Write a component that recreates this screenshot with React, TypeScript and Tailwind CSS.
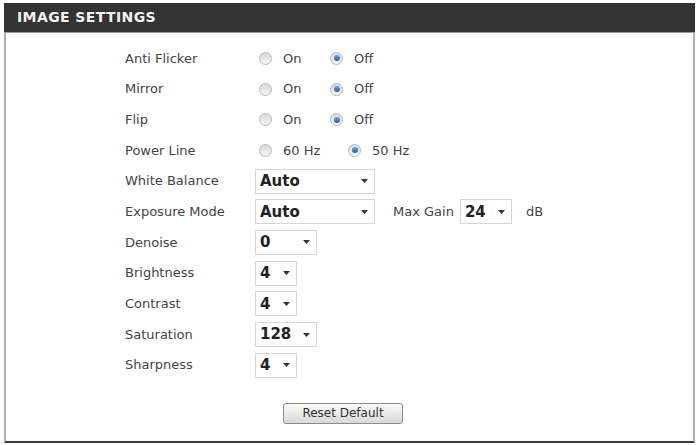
import React from 'react';

const font = { fontFamily: '"DejaVu Sans", Verdana, sans-serif' };

function Radio({ checked }: { checked?: boolean }) {
  return (
    <span className="ml-[4px] flex h-[13px] w-[13px] shrink-0 items-center justify-center rounded-full border border-[#b9b9b9] bg-gradient-to-b from-[#d8d8d8] to-[#f6f6f6]">
      {checked && (
        <span className="h-[6px] w-[6px] rounded-full bg-gradient-to-b from-[#6fa6dc] to-[#1f5fa6]" />
      )}
    </span>
  );
}

function RadioOption({ label, checked, width }: { label: string; checked?: boolean; width: string }) {
  return (
    <div className={`flex items-center ${width}`}>
      <Radio checked={checked} />
      <span className="ml-[11px] text-[13px] text-[#444]">{label}</span>
    </div>
  );
}

function Select({ value, width }: { value: string; width: string }) {
  return (
    <div
      className={`flex h-[25px] items-center justify-between border border-[#d6d6d6] bg-white pl-[4px] pr-[6px] ${width}`}
    >
      <span className="text-[15px] font-bold text-[#222]">{value}</span>
      <svg width="7" height="4" viewBox="0 0 7 4">
        <path d="M0 0h7L3.5 4z" fill="#333" />
      </svg>
    </div>
  );
}

function Row({ label, children }: { label: string; children: React.ReactNode }) {
  return (
    <div className="flex h-[30.7px] items-center">
      <div className="w-[130px] text-[13px] text-[#444]">{label}</div>
      <div className="flex items-center">{children}</div>
    </div>
  );
}

export default function App() {
  return (
    <div className="h-[445px] w-[698px] overflow-hidden bg-white pl-[4px] pt-[3px]" style={font}>
      <div className="w-[691px]">
        <div className="flex h-[29px] items-center bg-[#333333] pl-[13px]">
          <span className="text-[14px] font-bold tracking-[0.4px] text-[#f2f2f2]">IMAGE SETTINGS</span>
        </div>
        <div className="border-x-2 border-t border-b-2 border-x-[#b0b0b0] border-t-[#9a9a9a] border-b-[#3a3a3a] pb-[17px] pt-[10px]">
          <div className="pl-[119px]">
            <Row label="Anti Flicker">
              <RadioOption label="On" width="w-[71px]" />
              <RadioOption label="Off" checked width="w-[60px]" />
            </Row>
            <Row label="Mirror">
              <RadioOption label="On" width="w-[71px]" />
              <RadioOption label="Off" checked width="w-[60px]" />
            </Row>
            <Row label="Flip">
              <RadioOption label="On" width="w-[71px]" />
              <RadioOption label="Off" checked width="w-[60px]" />
            </Row>
            <Row label="Power Line">
              <RadioOption label="60 Hz" width="w-[89px]" />
              <RadioOption label="50 Hz" checked width="w-[80px]" />
            </Row>
            <Row label="White Balance">
              <Select value="Auto" width="w-[120px]" />
            </Row>
            <Row label="Exposure Mode">
              <Select value="Auto" width="w-[120px]" />
              <span className="ml-[18px] mr-[6px] text-[13px] text-[#444]">Max Gain</span>
              <Select value="24" width="w-[52px]" />
              <span className="ml-[14px] text-[13px] text-[#444]">dB</span>
            </Row>
            <Row label="Denoise">
              <Select value="0" width="w-[62px]" />
            </Row>
            <Row label="Brightness">
              <Select value="4" width="w-[42px]" />
            </Row>
            <Row label="Contrast">
              <Select value="4" width="w-[42px]" />
            </Row>
            <Row label="Saturation">
              <Select value="128" width="w-[62px]" />
            </Row>
            <Row label="Sharpness">
              <Select value="4" width="w-[42px]" />
            </Row>
          </div>
          <div className="mt-[22px] pl-[277px]">
            <button className="flex h-[21px] w-[120px] items-center justify-center rounded-[3px] border border-[#8a8a8a] bg-gradient-to-b from-[#fafafa] to-[#d9d9d9] text-[12px] text-[#333]">
              Reset Default
            </button>
          </div>
        </div>
      </div>
    </div>
  );
}
